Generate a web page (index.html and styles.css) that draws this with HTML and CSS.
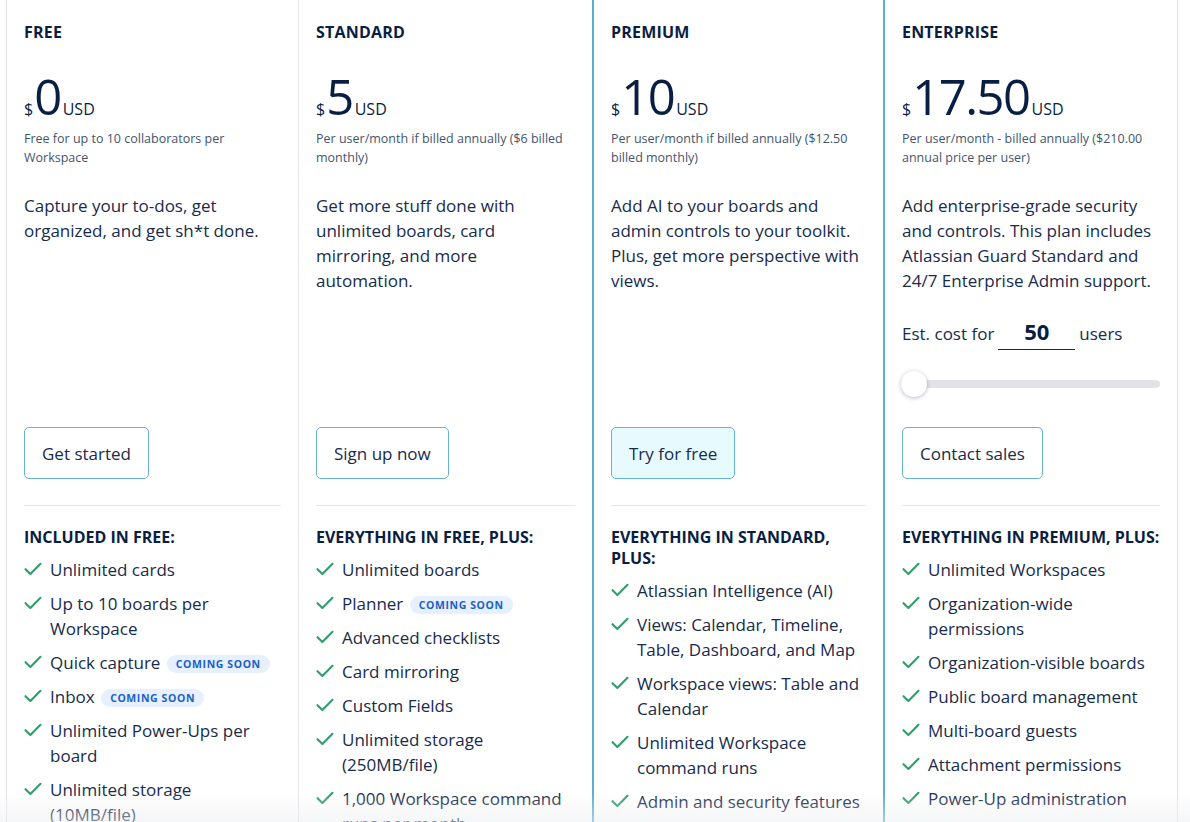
FILE: index.html
```html
<!DOCTYPE html>
<html lang="en">
<head>
<meta charset="utf-8">
<title>Trello pricing</title>
<link rel="stylesheet" href="styles.css">
</head>
<body>
<svg width="0" height="0" style="position:absolute">
  <defs>
    <symbol id="check" viewBox="0 0 18 14">
      <path d="M1.5 7.2 L6.4 12 L16.5 1.8" fill="none" stroke="currentColor" stroke-width="2.1" stroke-linecap="round" stroke-linejoin="round"/>
    </symbol>
  </defs>
</svg>
<main class="plans">
  <section class="plan plan-free">
    <div class="top">
      <h2 class="name">FREE</h2>
      <div class="price"><span class="cur">$</span><span class="amount">0</span><span class="unit">USD</span></div>
      <p class="note">Free for up to 10 collaborators per Workspace</p>
      <p class="desc">Capture your to-dos, get organized, and get sh*t done.</p>
    </div>
    <a class="btn">Get started</a>
    <hr class="rule">
    <h3 class="incl">INCLUDED IN FREE:</h3>
    <ul class="features">
      <li><svg class="ck"><use href="#check"/></svg><span>Unlimited cards</span></li>
      <li><svg class="ck"><use href="#check"/></svg><span>Up to 10 boards per Workspace</span></li>
      <li><svg class="ck"><use href="#check"/></svg><span>Quick capture <em class="soon">COMING SOON</em></span></li>
      <li><svg class="ck"><use href="#check"/></svg><span>Inbox <em class="soon">COMING SOON</em></span></li>
      <li><svg class="ck"><use href="#check"/></svg><span>Unlimited Power-Ups per board</span></li>
      <li><svg class="ck"><use href="#check"/></svg><span>Unlimited storage (10MB/file)</span></li>
    </ul>
  </section>

  <section class="plan plan-standard">
    <div class="top">
      <h2 class="name">STANDARD</h2>
      <div class="price"><span class="cur">$</span><span class="amount">5</span><span class="unit">USD</span></div>
      <p class="note">Per user/month if billed annually ($6 billed monthly)</p>
      <p class="desc">Get more stuff done with unlimited boards, card mirroring, and more automation.</p>
    </div>
    <a class="btn">Sign up now</a>
    <hr class="rule">
    <h3 class="incl">EVERYTHING IN FREE, PLUS:</h3>
    <ul class="features">
      <li><svg class="ck"><use href="#check"/></svg><span>Unlimited boards</span></li>
      <li><svg class="ck"><use href="#check"/></svg><span>Planner <em class="soon">COMING SOON</em></span></li>
      <li><svg class="ck"><use href="#check"/></svg><span>Advanced checklists</span></li>
      <li><svg class="ck"><use href="#check"/></svg><span>Card mirroring</span></li>
      <li><svg class="ck"><use href="#check"/></svg><span>Custom Fields</span></li>
      <li><svg class="ck"><use href="#check"/></svg><span>Unlimited storage (250MB/file)</span></li>
      <li><svg class="ck"><use href="#check"/></svg><span>1,000 Workspace command runs per month</span></li>
    </ul>
  </section>

  <section class="plan plan-premium">
    <div class="top">
      <h2 class="name">PREMIUM</h2>
      <div class="price"><span class="cur">$</span><span class="amount">10</span><span class="unit">USD</span></div>
      <p class="note">Per user/month if billed annually ($12.50 billed monthly)</p>
      <p class="desc">Add AI to your boards and admin controls to your toolkit. Plus, get more perspective with views.</p>
    </div>
    <a class="btn btn-primary">Try for free</a>
    <hr class="rule">
    <h3 class="incl">EVERYTHING IN STANDARD, PLUS:</h3>
    <ul class="features">
      <li><svg class="ck"><use href="#check"/></svg><span>Atlassian Intelligence (AI)</span></li>
      <li><svg class="ck"><use href="#check"/></svg><span>Views: Calendar, Timeline, Table, Dashboard, and Map</span></li>
      <li><svg class="ck"><use href="#check"/></svg><span>Workspace views: Table and Calendar</span></li>
      <li><svg class="ck"><use href="#check"/></svg><span>Unlimited Workspace command runs</span></li>
      <li><svg class="ck"><use href="#check"/></svg><span>Admin and security features</span></li>
    </ul>
  </section>

  <section class="plan plan-enterprise">
    <div class="top">
      <h2 class="name">ENTERPRISE</h2>
      <div class="price"><span class="cur">$</span><span class="amount">17.50</span><span class="unit">USD</span></div>
      <p class="note">Per user/month - billed annually ($210.00 annual price per user)</p>
      <p class="desc">Add enterprise-grade security and controls. This plan includes Atlassian Guard Standard and 24/7 Enterprise Admin support.</p>
      <div class="est">
        <span>Est. cost for</span>
        <span class="users-input">50</span>
        <span>users</span>
      </div>
      <div class="slider"><span class="thumb"></span></div>
    </div>
    <a class="btn">Contact sales</a>
    <hr class="rule">
    <h3 class="incl">EVERYTHING IN PREMIUM, PLUS:</h3>
    <ul class="features">
      <li><svg class="ck"><use href="#check"/></svg><span>Unlimited Workspaces</span></li>
      <li><svg class="ck"><use href="#check"/></svg><span>Organization-wide permissions</span></li>
      <li><svg class="ck"><use href="#check"/></svg><span>Organization-visible boards</span></li>
      <li><svg class="ck"><use href="#check"/></svg><span>Public board management</span></li>
      <li><svg class="ck"><use href="#check"/></svg><span>Multi-board guests</span></li>
      <li><svg class="ck"><use href="#check"/></svg><span>Attachment permissions</span></li>
      <li><svg class="ck"><use href="#check"/></svg><span>Power-Up administration</span></li>
    </ul>
  </section>
</main>
<div class="bottom-fade"></div>
</body>
</html>
```

FILE: styles.css
```css
* { box-sizing: border-box; }

html, body {
  margin: 0;
  padding: 0;
  background: #fff;
  overflow: hidden;
}

body {
  font-family: "Open Sans", "Noto Sans", sans-serif;
  color: #172B4D;
  height: 822px;
}

.plans {
  display: grid;
  grid-template-columns: repeat(4, 1fr);
  width: 1172px;
  margin-left: 6px;
  min-height: 822px;
}

.plan {
  display: flex;
  flex-direction: column;
  padding: 22px 17px 0 17px;
}

.plan-free {
  border-left: 1px solid #E4E6EA;
  border-right: 1px solid #E4E6EA;
}

.plan-premium {
  border-left: 2px solid #5AAFD3;
  border-right: 2px solid #5AAFD3;
}

.plan-enterprise {
  border-right: 1px solid #E4E6EA;
}

.top {
  height: 405px;
  display: flex;
  flex-direction: column;
}

.name {
  margin: 0;
  font-size: 16px;
  line-height: 20px;
  font-weight: 700;
  color: #091E42;
  letter-spacing: 0.2px;
}

.price {
  display: flex;
  align-items: baseline;
  margin-top: 30px;
  height: 48px;
  color: #091E42;
}

.cur {
  font-size: 16px;
  margin-right: 1px;
}

.amount {
  font-size: 49px;
  line-height: 48px;
  font-weight: 500;
  letter-spacing: -1.5px;
}

.unit {
  font-size: 16px;
  margin-left: 2px;
}

.note {
  margin: 9px 0 0;
  font-size: 12.5px;
  line-height: 19px;
  color: #44546F;
}

.desc {
  margin: 26px 0 0;
  font-size: 17px;
  line-height: 25px;
  color: #172B4D;
}

.est {
  display: flex;
  align-items: center;
  margin-top: 23px;
  font-size: 17px;
  line-height: 25px;
}

.users-input {
  width: 77px;
  margin: 0 4px;
  padding-bottom: 3px;
  text-align: center;
  font-size: 22px;
  font-weight: 700;
  line-height: 30px;
  border-bottom: 1.5px solid #172B4D;
  color: #091E42;
}

.slider {
  position: relative;
  margin-top: 30px;
  height: 8px;
  border-radius: 4px;
  background: #E2E3E6;
}

.thumb {
  position: absolute;
  left: -1px;
  top: -9px;
  width: 26px;
  height: 26px;
  border-radius: 50%;
  background: #fff;
  box-shadow: 0 1px 4px rgba(9, 30, 66, 0.3);
}

.btn {
  align-self: flex-start;
  display: inline-flex;
  align-items: center;
  height: 52px;
  padding: 0 17px;
  border: 1px solid #66B3D5;
  border-radius: 5px;
  font-size: 17px;
  color: #172B4D;
  background: #fff;
}

.btn-primary {
  background: #E7FBFF;
}

.rule {
  margin: 26px 0 0;
  border: 0;
  border-top: 1px solid #E4E6EA;
  height: 0;
}

.incl {
  margin: 21px 0 0;
  font-size: 16px;
  line-height: 21px;
  font-weight: 700;
  color: #091E42;
}

.features {
  list-style: none;
  margin: 9px 0 0;
  padding: 0;
  display: flex;
  flex-direction: column;
  gap: 9px;
}

.features li {
  display: flex;
  align-items: flex-start;
  font-size: 17px;
  line-height: 25px;
  color: #172B4D;
}

.ck {
  flex: none;
  width: 18px;
  height: 14px;
  margin-top: 5px;
  margin-right: 8px;
  color: #2E9E6B;
}

.soon {
  display: inline-block;
  font-style: normal;
  font-size: 10.5px;
  font-weight: 700;
  letter-spacing: 0.6px;
  line-height: 18px;
  padding: 0 9px;
  margin-left: 2px;
  border-radius: 9px;
  background: #E6F0FE;
  color: #1D5FC8;
  vertical-align: 1px;
}

.bottom-fade {
  position: fixed;
  left: 0;
  right: 0;
  bottom: 0;
  height: 30px;
  background: linear-gradient(to bottom, rgba(240, 241, 243, 0), rgba(236, 237, 240, 0.5));
  pointer-events: none;
}
```
